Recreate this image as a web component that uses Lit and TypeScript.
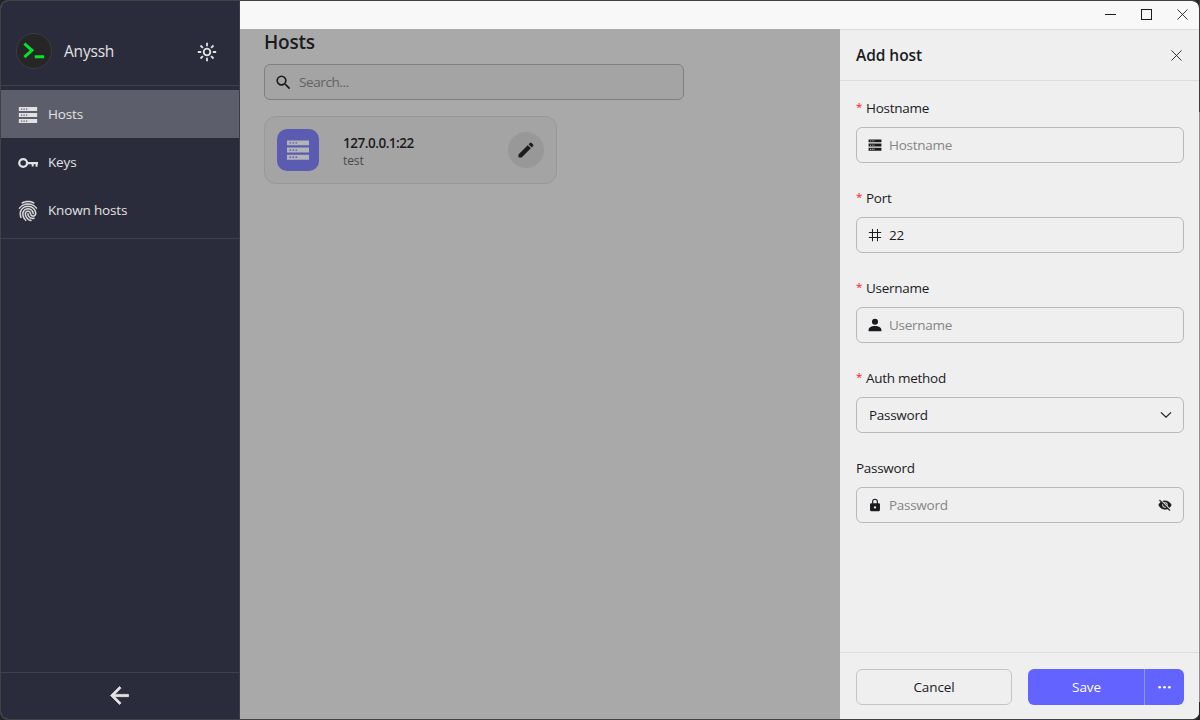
import { LitElement, html, svg, css } from "lit";
import { customElement, property } from "lit/decorators.js";

const GLYPHS: Record<string, unknown> = {
  sun: svg`<g fill="none" stroke="currentColor" stroke-width="2.2"><circle cx="12" cy="12" r="4"/><path d="M12 1v4M12 19v4M1 12h4M19 12h4M4.2 4.2l2.9 2.9M16.9 16.9l2.9 2.9M4.2 19.8l2.9-2.9M16.9 7.1l2.9-2.9"/></g>`,
  server: svg`<path fill-rule="evenodd" d="M1 2.400h22v4.900H1zM1 9.600h22v4.900H1zM1 16.800h22v4.900H1zM3.500 4.200v1.400h1.600V4.200zM6.500 4.200v1.400h1.600V4.200zM9.500 4.200v1.400h1.600V4.200zM3.500 11.400v1.400h1.600v-1.400zM6.500 11.400v1.400h1.600v-1.400zM9.500 11.400v1.400h1.600v-1.400zM3.500 18.600v1.400h1.600v-1.400zM6.500 18.600v1.400h1.600v-1.400zM9.500 18.600v1.400h1.600v-1.400z"/>`,
  key: svg`<g fill="none" stroke="currentColor"><circle cx="6.200" cy="12" r="4.700" stroke-width="2.700"/><path stroke-width="2.700" d="M10.900 12H24"/><path stroke-width="2.400" d="M17.600 12v4.200M22.300 12v4.400"/></g>`,
  finger: svg`<path d="M17.81 4.47c-.08 0-.16-.02-.23-.06C15.66 3.42 14 3 12.01 3c-1.98 0-3.86.47-5.57 1.41-.24.13-.54.04-.68-.2-.13-.24-.04-.55.2-.68C7.82 2.52 9.86 2 12.01 2c2.13 0 3.99.47 6.03 1.52.25.13.34.43.21.67-.09.18-.26.28-.44.28zM3.5 9.72c-.1 0-.2-.03-.29-.09-.23-.16-.28-.47-.12-.7.99-1.4 2.25-2.5 3.75-3.27C9.98 4.04 14 4.03 17.15 5.65c1.5.77 2.76 1.86 3.75 3.25.16.22.11.54-.12.7-.23.16-.54.11-.7-.12-.9-1.26-2.04-2.25-3.39-2.94-2.87-1.47-6.54-1.47-9.4.01-1.36.7-2.5 1.7-3.4 2.96-.08.14-.23.21-.39.21zm6.25 12.07c-.13 0-.26-.05-.35-.15-.87-.87-1.34-1.43-2.01-2.64-.69-1.23-1.05-2.73-1.05-4.34 0-2.97 2.54-5.39 5.66-5.39s5.66 2.42 5.66 5.39c0 .28-.22.5-.5.5s-.5-.22-.5-.5c0-2.42-2.09-4.39-4.66-4.39-2.57 0-4.66 1.97-4.66 4.39 0 1.44.32 2.77.93 3.85.64 1.15 1.08 1.64 1.85 2.42.19.2.19.51 0 .71-.11.1-.24.15-.37.15zm7.17-1.85c-1.19 0-2.24-.3-3.1-.89-1.49-1.01-2.38-2.65-2.38-4.39 0-.28.22-.5.5-.5s.5.22.5.5c0 1.41.72 2.74 1.94 3.56.71.48 1.54.71 2.54.71.24 0 .64-.03 1.04-.1.27-.05.53.13.58.41.05.27-.13.53-.41.58-.57.11-1.07.12-1.21.12zM14.91 22c-.04 0-.09-.01-.13-.02-1.59-.44-2.63-1.03-3.72-2.1-1.4-1.39-2.17-3.24-2.17-5.22 0-1.62 1.38-2.94 3.08-2.94 1.7 0 3.08 1.32 3.08 2.94 0 1.07.93 1.94 2.08 1.94s2.08-.87 2.08-1.94c0-3.77-3.25-6.83-7.25-6.83-2.84 0-5.44 1.58-6.61 4.03-.39.81-.59 1.76-.59 2.8 0 .78.07 2.01.67 3.61.1.26-.03.55-.29.64-.26.1-.55-.04-.64-.29-.49-1.31-.73-2.61-.73-3.96 0-1.2.23-2.29.68-3.24 1.33-2.79 4.28-4.6 7.51-4.6 4.55 0 8.25 3.51 8.25 7.83 0 1.62-1.38 2.94-3.08 2.94s-3.08-1.32-3.08-2.94c0-1.07-.93-1.94-2.08-1.94s-2.08.87-2.08 1.94c0 1.71.66 3.31 1.87 4.51.95.94 1.86 1.46 3.27 1.85.27.07.42.35.35.61-.05.23-.26.38-.47.38z" stroke="currentColor" stroke-width=".5"/>`,
  back: svg`<path d="M20 11H7.83l5.59-5.59L12 4l-8 8 8 8 1.41-1.41L7.83 13H20z" stroke="currentColor" stroke-width=".7"/>`,
  search: svg`<path d="M15.5 14h-.79l-.28-.27A6.471 6.471 0 0 0 16 9.5 6.5 6.5 0 1 0 9.5 16c1.61 0 3.09-.59 4.23-1.57l.27.28v.79l5 4.99L20.49 19l-4.99-5zm-6 0C7.01 14 5 11.99 5 9.5S7.01 5 9.5 5 14 7.01 14 9.5 11.99 14 9.5 14z"/>`,
  pencil: svg`<path d="M3 17.25V21h3.75L17.81 9.94l-3.75-3.75L3 17.25zM20.71 7.04a1 1 0 0 0 0-1.41l-2.34-2.34a1 1 0 0 0-1.41 0l-1.83 1.83 3.75 3.75 1.83-1.83z"/>`,
  hash: svg`<path fill="none" stroke="currentColor" stroke-width="1.800" d="M7.700 1.500v21M16.300 1.500v21M1.500 7.700h21M1.500 16.300h21"/>`,
  person: svg`<path d="M12 11.600a5.200 5.200 0 1 0 0-10.400 5.200 5.200 0 0 0 0 10.400zM1 22.500v-2.200c0-4.200 5.500-6.600 11-6.600s11 2.400 11 6.600v2.200z"/>`,
  lock: svg`<path fill-rule="evenodd" d="M18.500 8.800H17V6.200a5 5 0 0 0-10 0v2.600H5.500a2 2 0 0 0-2 2v9.900a2 2 0 0 0 2 2h13a2 2 0 0 0 2-2v-9.900a2 2 0 0 0-2-2zM12 18a2 2 0 1 1 0-4 2 2 0 0 1 0 4zm3-9.200H9V6.200a3 3 0 0 1 6 0z"/>`,
  eyeOff: svg`<path d="M12 7c2.760 0 5 2.240 5 5 0 .65-.13 1.260-.36 1.830l2.920 2.920c1.510-1.260 2.700-2.890 3.430-4.750-1.730-4.390-6-7.500-11-7.500-1.400 0-2.740.25-3.980.7l2.160 2.160C10.740 7.130 11.350 7 12 7zM2 4.270l2.280 2.280.46.46A11.804 11.804 0 0 0 1 12c1.730 4.390 6 7.500 11 7.500 1.550 0 3.030-.3 4.380-.84l.42.42L19.730 22 21 20.730 3.270 3 2 4.270zM7.530 9.800l1.550 1.550c-.05.21-.08.43-.08.65 0 1.660 1.340 3 3 3 .22 0 .44-.03.65-.08l1.550 1.550c-.67.33-1.410.53-2.200.53-2.760 0-5-2.240-5-5 0-.79.2-1.530.53-2.200zm4.310-.78l3.150 3.150.02-.16c0-1.660-1.340-3-3-3l-.17.01z" stroke="currentColor" stroke-width=".5"/>`,
  chevron: svg`<path fill="none" stroke="currentColor" stroke-width="2" d="M5 7.400l8.700 8.500 8.700-8.500"/>`,
  cross: svg`<path fill="none" stroke="currentColor" stroke-width="1.900" d="M1 1l22 22M23 1L1 23"/>`,
  minimize: svg`<path fill="none" stroke="currentColor" stroke-width="2.200" d="M0 12h24"/>`,
  maximize: svg`<path fill="none" stroke="currentColor" stroke-width="2.200" d="M1.100 1.100h21.800v21.800H1.100z"/>`,
  dots: svg`<circle cx="3" cy="11.500" r="2.500"/><circle cx="12" cy="11.500" r="2.500"/><circle cx="21" cy="11.500" r="2.500"/>`,
  prompt: svg`<path fill="none" stroke="currentColor" stroke-width="3.200" d="M1.500 4l8.300 7.300-8.300 7.300M12.800 18.300h10.200"/>`,
};

@customElement("ui-icon")
class UiIcon extends LitElement {
  @property() name = "";
  static styles = css`
    :host { display: block; flex: none; width: 14px; height: 14px; }
    svg { display: block; width: 100%; height: 100%; fill: currentColor; }
  `;
  render() {
    return html`<svg viewBox="0 0 24 24">${GLYPHS[this.name]}</svg>`;
  }
}

@customElement("form-field")
class FormField extends LitElement {
  @property() label = "";
  @property() icon = "";
  @property() text = "";
  @property() trailing = "";
  @property({ type: Boolean }) required = false;
  @property({ type: Boolean }) filled = false;
  static styles = css`
    :host { display: block; height: 90px; }
    .label { display: flex; height: 22px; line-height: 22px; margin-bottom: 8px; white-space: nowrap; }
    .star { color: #ff1226; width: 10px; flex: none; font-size: 11.5px; line-height: 20px; letter-spacing: 0; }
    .box { box-sizing: border-box; height: 36px; border: 1px solid #b9b9b9; border-radius: 6px; display: flex; align-items: center; padding: 0 12px; }
    .lead { margin: 0 7px 0 -1px; }
    .text { flex: 1; color: #858585; }
    .filled { color: #1b1b1f; }
    .trail { margin-right: -1px; }
  `;
  render() {
    return html`
      <div class="label">${this.required ? html`<span class="star">*</span>` : ""}<span>${this.label}</span></div>
      <div class="box">
        ${this.icon ? html`<ui-icon class="lead" name=${this.icon}></ui-icon>` : ""}
        <span class="text ${this.filled ? "filled" : ""}">${this.text}</span>
        ${this.trailing ? html`<ui-icon class="trail" name=${this.trailing}></ui-icon>` : ""}
      </div>`;
  }
}

@customElement("app-root")
class AppRoot extends LitElement {
  static styles = css`
    :host { display: block; width: 1200px; height: 720px; background: linear-gradient(#3a3a3f 112px, #8d8d8d 112px 702px, #232328 702px) right / 1px 100% no-repeat, #232328; font: 13.5px/20px "Open Sans", "Noto Sans", sans-serif; letter-spacing: -0.28px; color: #1b1b1f; }
    * { box-sizing: border-box; }
    .window { height: 720px; display: grid; grid-template-columns: 239px 1fr; border: 1px solid #414146; border-right-color: transparent; border-radius: 8px; overflow: hidden; background: #f8f8f8 padding-box; }
    .side { background: #2b2c3b; color: #e2e2e4; display: flex; flex-direction: column; border-right: 1px solid #3a3b46; }
    .brand { height: 85px; border-bottom: 1px solid #3f404d; padding: 16px 22px 0 15px; display: flex; align-items: center; }
    .logo { width: 36px; height: 36px; border-radius: 50%; background: #262626; border: 1px solid #3b3b48; color: #00e626; display: grid; place-items: center; }
    .logo ui-icon { width: 22px; height: 22px; }
    .name { flex: 1; margin-left: 12px; font-size: 15.5px; letter-spacing: -0.2px; }
    .sun { width: 20px; height: 20px; margin-top: 2px; }
    .menu { padding-top: 4px; height: 153px; border-bottom: 1px solid #3f404d; }
    .item { height: 48px; display: flex; align-items: center; gap: 10px; padding-left: 17px; letter-spacing: -0.16px; }
    .item ui-icon { width: 20px; height: 20px; margin-top: 1px; }
    .item .print { width: 24px; height: 24px; margin: 2px -2px 0; }
    .active { background: #5d5e6b; }
    .spring { flex: 1; }
    .collapse { height: 47px; border-top: 1px solid #3f404d; display: grid; place-items: center; padding: 0 1px 1px 0; }
    .collapse ui-icon { width: 27px; height: 27px; }
    .right { display: grid; grid-template-rows: 28px 1fr; min-width: 0; }
    .bar { display: flex; justify-content: flex-end; gap: 25px; padding: 8px 11px 0 0; }
    .bar ui-icon { width: 11px; height: 11px; }
    .content { display: grid; grid-template-columns: 600px 1fr; min-height: 0; }
    .main { background: #a9a9a9; padding: 0 24px; }
    h1 { margin: 0; height: 35px; font-size: 19px; line-height: 26px; font-weight: 600; letter-spacing: -0.2px; }
    .search { width: 420px; height: 36px; border: 1px solid #808080; border-radius: 6px; background: #a4a4a4; display: flex; align-items: center; gap: 6px; padding: 0 9px; color: #626262; }
    .search span { letter-spacing: -0.4px; }
    .search ui-icon { width: 19px; height: 19px; color: #1b1b1f; }
    .card { width: 293px; height: 68px; margin-top: 16px; border: 1px solid #989898; border-radius: 12px; background: #a4a4a4; display: flex; align-items: center; padding: 0 12px; }
    .tile { width: 42px; height: 42px; border-radius: 10px; background: #5b5bb1; color: #b4b4b7; display: grid; place-items: center; }
    .tile ui-icon { width: 24px; height: 24px; }
    .host { flex: 1; margin-left: 24px; padding-top: 2px; line-height: 19px; }
    .addr { font-weight: 600; letter-spacing: -0.48px; }
    .user { font-size: 12px; line-height: 15px; color: #48484c; letter-spacing: -0.1px; }
    .edit { width: 36px; height: 36px; border-radius: 50%; background: #989898; display: grid; place-items: center; }
    .edit ui-icon { width: 20px; height: 20px; }
    .drawer { background: #efefef; border-top: 1px solid #dcdcdc; display: flex; flex-direction: column; min-width: 0; }
    .head { height: 51px; border-bottom: 1px solid #dcdcdc; display: flex; align-items: center; justify-content: space-between; padding: 0 17px 0 16px; font-size: 15.5px; font-weight: 600; letter-spacing: -0.05px; }
    .head ui-icon { width: 11px; height: 11px; margin-top: 1px; }
    .form { flex: 1; padding: 16px 15px 0 16px; min-height: 0; }
    .foot { height: 67px; border-top: 1px solid #dcdcdc; display: flex; gap: 16px; padding: 16px 15px 0 16px; }
    .btn { height: 36px; width: 156px; border-radius: 6px; display: flex; align-items: center; justify-content: center; letter-spacing: -0.1px; }
    .cancel { border: 1px solid #c5c5c5; }
    .save { background: #6363ff; color: #fff; }
    .save span { flex: 1; text-align: center; padding-left: 1px; }
    .more { width: 40px; height: 36px; border-left: 1px solid #9191ff; display: grid; place-items: center; padding-right: 1px; }
    .more ui-icon { width: 13px; height: 13px; }
  `;
  render() {
    return html`
      <div class="window">
        <aside class="side">
          <div class="brand">
            <div class="logo"><ui-icon name="prompt"></ui-icon></div>
            <span class="name">Anyssh</span>
            <ui-icon class="sun" name="sun"></ui-icon>
          </div>
          <nav class="menu">
            <div class="item active"><ui-icon name="server"></ui-icon>Hosts</div>
            <div class="item"><ui-icon name="key"></ui-icon>Keys</div>
            <div class="item"><ui-icon class="print" name="finger"></ui-icon>Known hosts</div>
          </nav>
          <div class="spring"></div>
          <div class="collapse"><ui-icon name="back"></ui-icon></div>
        </aside>
        <div class="right">
          <header class="bar">
            <ui-icon name="minimize"></ui-icon><ui-icon name="maximize"></ui-icon><ui-icon name="cross"></ui-icon>
          </header>
          <div class="content">
            <main class="main">
              <h1>Hosts</h1>
              <div class="search"><ui-icon name="search"></ui-icon><span>Search...</span></div>
              <div class="card">
                <div class="tile"><ui-icon name="server"></ui-icon></div>
                <div class="host"><div class="addr">127.0.0.1:22</div><div class="user">test</div></div>
                <div class="edit"><ui-icon name="pencil"></ui-icon></div>
              </div>
            </main>
            <section class="drawer">
              <div class="head"><span>Add host</span><ui-icon name="cross"></ui-icon></div>
              <div class="form">
                <form-field required label="Hostname" icon="server" text="Hostname"></form-field>
                <form-field required label="Port" icon="hash" text="22" filled></form-field>
                <form-field required label="Username" icon="person" text="Username"></form-field>
                <form-field required label="Auth method" text="Password" trailing="chevron" filled></form-field>
                <form-field label="Password" icon="lock" text="Password" trailing="eyeOff"></form-field>
              </div>
              <div class="foot">
                <div class="btn cancel">Cancel</div>
                <div class="btn save"><span>Save</span><div class="more"><ui-icon name="dots"></ui-icon></div></div>
              </div>
            </section>
          </div>
        </div>
      </div>`;
  }
}
